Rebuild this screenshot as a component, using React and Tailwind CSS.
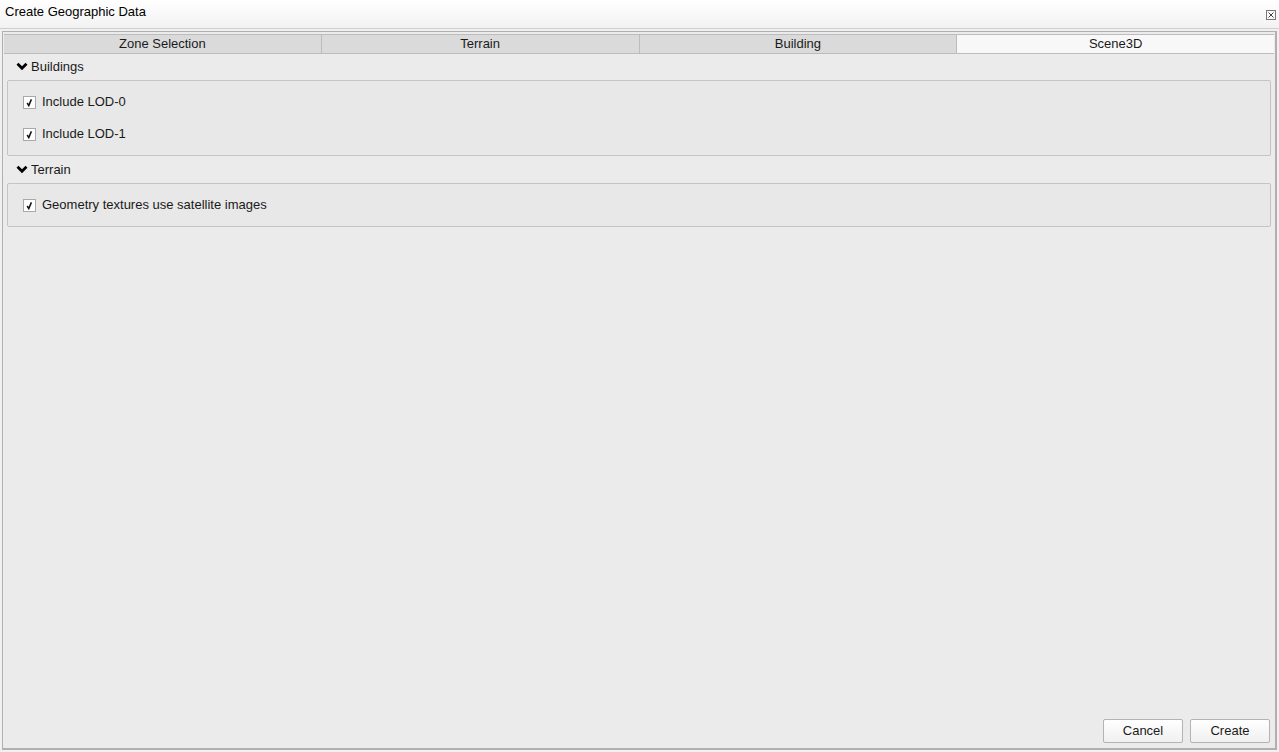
const tabs = ["Zone Selection", "Terrain", "Building", "Scene3D"];

function Check({ label }) {
  return (
    <label className="flex items-center gap-[6px] h-[16px]">
      <span className="w-[13px] h-[13px] border border-[#a9a9a9] bg-white flex items-center justify-center">
        <svg width="9" height="9" viewBox="0 0 9 9">
          <path d="M2.2 5 L3.8 7.6 L6.4 1.4" fill="none" stroke="#111" strokeWidth="1.5" />
        </svg>
      </span>
      <span>{label}</span>
    </label>
  );
}

function Section({ title, first, children }) {
  return (
    <div className={first ? "-mt-px" : ""}>
      <div className="flex items-center gap-[3px] h-[27px] pl-[9px]">
        <svg width="12" height="9" viewBox="0 0 12 9">
          <path d="M1.5 1.8 L6 6.3 L10.5 1.8" fill="none" stroke="#000" strokeWidth="2.8" />
        </svg>
        <span>{title}</span>
      </div>
      <div className="border border-[#c4c4c4] rounded-[2px] bg-[#e8e8e8] pl-[15px] pr-2 pt-[13px] pb-[13px] flex flex-col gap-[16px]">
        {children}
      </div>
    </div>
  );
}

export default function App() {
  return (
    <div
      className="w-[1279px] h-[752px] bg-[#f0f0f0] flex flex-col text-[13px] text-[#1a1a1a] overflow-hidden"
      style={{ fontFamily: '"Liberation Sans", Arial, sans-serif' }}
    >
      {/* Title bar */}
      <div className="h-[29px] shrink-0 flex items-center justify-between pl-[5px] pr-[2px] bg-gradient-to-b from-white to-[#f2f2f2] border-b border-[#cfcfcf]">
        <span className="-mt-[4px] text-black">Create Geographic Data</span>
        <span className="w-[10px] h-[10px] border border-[#777] flex items-center justify-center mt-[1px] mr-[1px]">
          <svg width="8" height="8" viewBox="0 0 8 8">
            <path d="M1.5 1.5 L6.5 6.5 M6.5 1.5 L1.5 6.5" stroke="#444" strokeWidth="1" />
          </svg>
        </span>
      </div>

      {/* Main panel */}
      <div className="flex-1 mx-[2px] mt-[2px] mb-[2px] border-l border-t border-r-2 border-b-2 border-[#b0b0b0] bg-[#ebebeb] flex flex-col">
        <div className="flex h-[20px] mt-[2px] mx-px border-b border-[#bcbcbc]">
          {tabs.map((t, i) => (
            <div
              key={t}
              className={`flex-1 flex items-center justify-center border-t border-[#bcbcbc] ${
                i > 0 ? "border-l" : ""
              } ${i === 3 ? "bg-[#f8f8f8]" : "bg-[#dadada]"}`}
            >
              {t}
            </div>
          ))}
        </div>

        <div className="flex-1 flex flex-col px-[4px]">
          <Section title="Buildings" first>
            <Check label="Include LOD-0" />
            <Check label="Include LOD-1" />
          </Section>
          <Section title="Terrain">
            <Check label="Geometry textures use satellite images" />
          </Section>
          <div className="flex-1" />
          <div className="flex justify-end gap-[7px] pb-[5px] pr-[1px]">
            <button className="w-[80px] h-[24px] border border-[#b3b3b3] rounded-[2px] bg-gradient-to-b from-white to-[#f0f0f0]">
              Cancel
            </button>
            <button className="w-[80px] h-[24px] border border-[#b3b3b3] rounded-[2px] bg-gradient-to-b from-white to-[#f0f0f0]">
              Create
            </button>
          </div>
        </div>
      </div>
    </div>
  );
}
